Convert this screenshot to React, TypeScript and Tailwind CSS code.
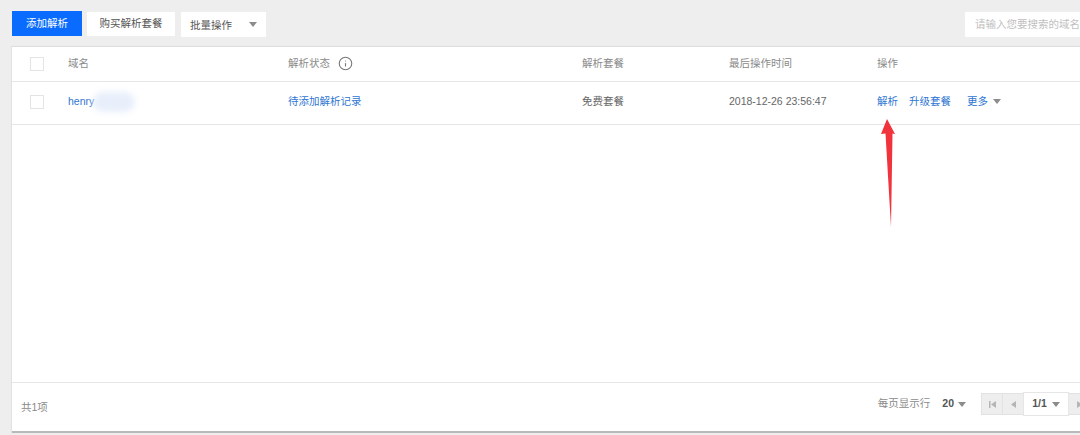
import { Info } from "lucide-react";

const font = { fontFamily: '"Liberation Sans", "Noto Sans CJK SC", sans-serif' };

const Caret = ({ className = "" }: { className?: string }) => (
  <span className={`inline-block w-0 h-0 border-x-[4px] border-x-transparent border-t-[5px] border-t-[#8c8c8c] ${className}`} />
);

const Checkbox = () => <div className="w-[14px] h-[14px] border border-[#e4e4e4] bg-white" />;

const App = () => {
  return (
    <div className="relative w-[1080px] h-[435px] overflow-hidden bg-[#eeeeee] text-[10.5px] text-[#555555]" style={font}>
      {/* Toolbar */}
      <div className="flex items-start justify-between h-[46px] pl-[12px] pt-[11px]">
        <div className="flex gap-[5px]">
          <button className="w-[70px] h-[25px] pt-[1px] bg-[#0a6cff] text-white">添加解析</button>
          <button className="w-[88px] h-[24px] mt-[1px] bg-white text-[#555555]">购买解析套餐</button>
          <div className="flex items-center justify-between w-[85px] h-[25px] mt-[1px] ml-[1px] pl-[9px] pr-[9px] bg-white">
            <span className="mt-[2px]">批量操作</span>
            <Caret />
          </div>
        </div>
        <div className="w-[115px] h-[25px] mt-[1px] pl-[10px] bg-white text-[#c0c0c0] leading-[24px] whitespace-nowrap overflow-hidden">
          请输入您要搜索的域名
        </div>
      </div>

      {/* Table card */}
      <div className="flex flex-col ml-[12px] h-[387px] bg-white border-t border-[#dddddd] border-b-2 border-b-[#b9b9b9] shadow-[-1px_0_1px_#e2e2e2]">
        <div className="grid grid-cols-[56px_220px_294px_147px_148px_1fr] items-center h-[35px] pb-[1px] border-b border-[#e6e6e6] text-[#8a8a8a]">
          <div className="pl-[18px]">
            <Checkbox />
          </div>
          <div>域名</div>
          <div className="flex items-center gap-[8px]">
            解析状态
            <Info size={15} strokeWidth={1.75} className="text-[#777777]" />
          </div>
          <div>解析套餐</div>
          <div>最后操作时间</div>
          <div>操作</div>
        </div>

        <div className="grid grid-cols-[56px_220px_294px_147px_148px_1fr] items-center h-[43px] pb-[3px] border-b border-[#e6e6e6]">
          <div className="pl-[18px]">
            <Checkbox />
          </div>
          <div className="flex items-center text-[#2f76d2]">
            henry
            <span className="w-[42px] h-[20px] -ml-[1px] rounded-full bg-[#e8effb] blur-[3px]" />
          </div>
          <div className="text-[#2f76d2]">待添加解析记录</div>
          <div className="text-[#666666]">免费套餐</div>
          <div className="text-[#666666]">2018-12-26 23:56:47</div>
          <div className="flex items-center text-[#2f76d2]">
            <span>解析</span>
            <span className="ml-[11px]">升级套餐</span>
            <span className="ml-[16px]">更多</span>
            <Caret className="ml-[5px]" />
          </div>
        </div>

        <div className="flex-1" />

        {/* Footer */}
        <div className="flex items-center justify-between h-[49px] border-t border-[#e6e6e6] pl-[9px]">
          <span className="pt-[2px] text-[#8a8a8a]">共1项</span>
          <div className="flex items-center pb-[6px] -mr-[11px]">
            <span className="text-[#8a8a8a]">每页显示行</span>
            <span className="ml-[12px] font-bold text-[#555555]">20</span>
            <Caret className="ml-[4px]" />
            <div className="flex items-center h-[22px] ml-[15px] border border-[#e2e2e2] bg-[#eeeeee]">
              <div className="flex items-center justify-center w-[21px] h-full border-r border-[#e2e2e2]">
                <svg width="7" height="7" viewBox="0 0 7 7" fill="#b5b5b5">
                  <rect x="0" y="0" width="1.5" height="7" />
                  <path d="M7 0v7L2 3.5z" />
                </svg>
              </div>
              <div className="flex items-center justify-center w-[20px] h-full">
                <svg width="5" height="7" viewBox="0 0 5 7" fill="#b5b5b5">
                  <path d="M5 0v7L0 3.5z" />
                </svg>
              </div>
              <div className="flex items-center justify-center gap-[5px] w-[46px] h-[24px] -my-[1px] bg-white border border-[#e6e6e6] font-bold text-[#555555]">
                1/1
                <Caret />
              </div>
              <div className="flex items-center justify-center w-[21px] h-full">
                <svg width="5" height="7" viewBox="0 0 5 7" fill="#b5b5b5">
                  <path d="M0 0v7l5-3.5z" />
                </svg>
              </div>
            </div>
          </div>
        </div>
      </div>

      {/* Red annotation arrow */}
      <svg className="absolute left-[878px] top-[118px]" width="24" height="110" viewBox="0 0 24 110">
        <path d="M9 1 L17 16 L14.500 15.500 L13 109 L7.500 15.500 L3 16 Z" fill="#f0333c" />
      </svg>
    </div>
  );
};

export default App;
